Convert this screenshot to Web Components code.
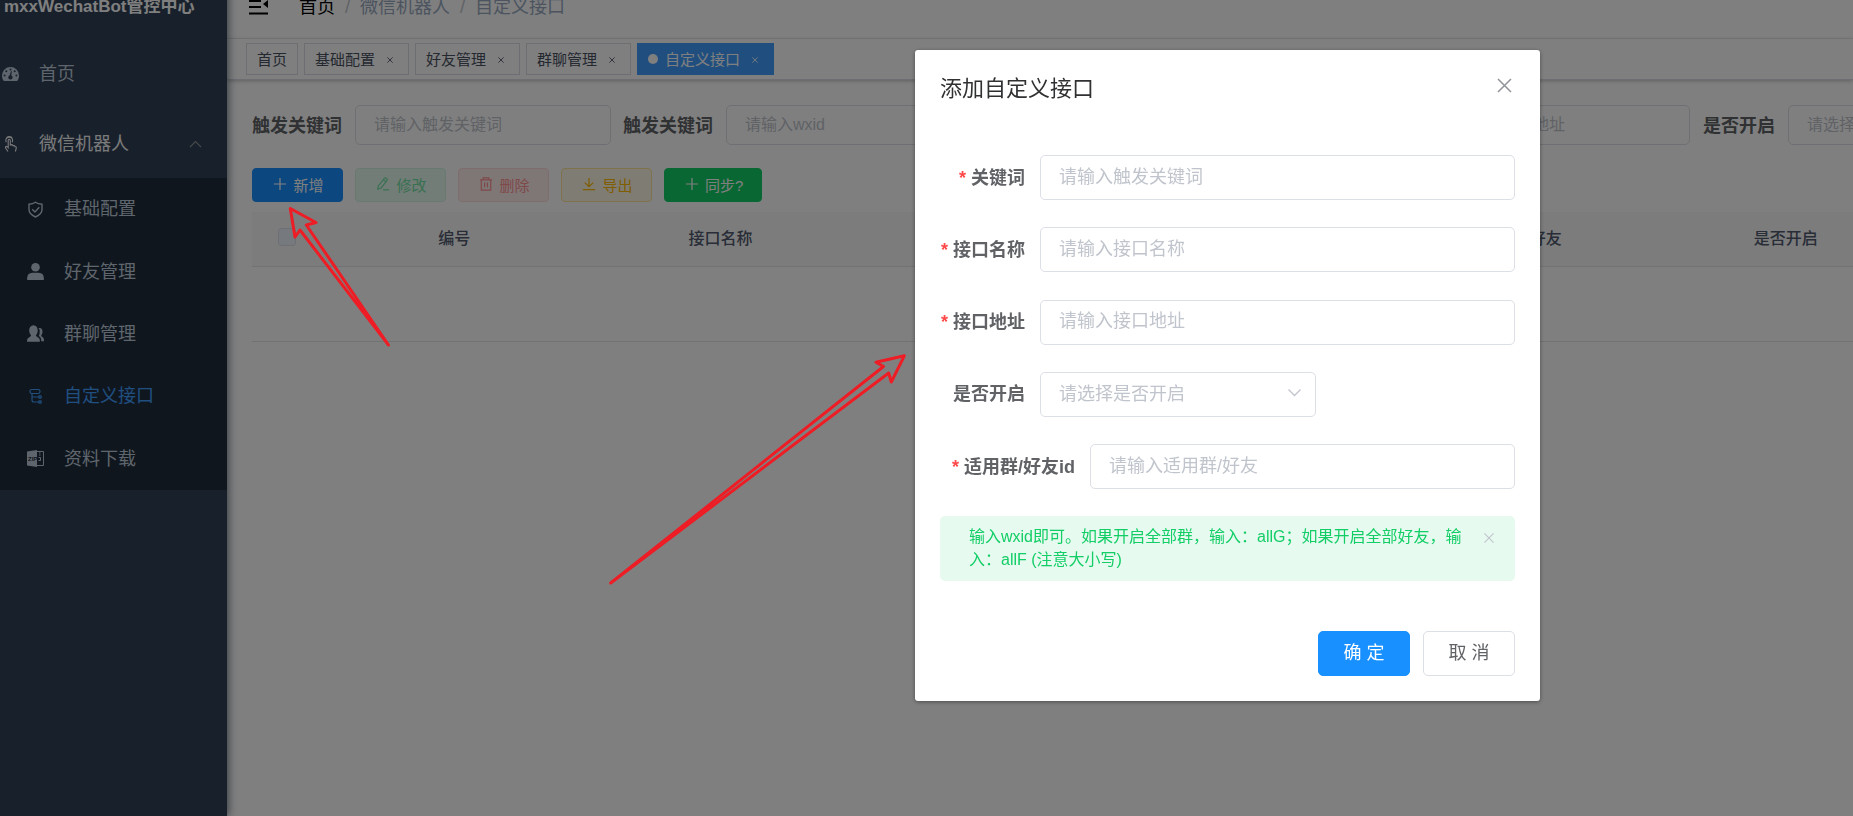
<!DOCTYPE html>
<html lang="zh-CN">
<head>
<meta charset="utf-8">
<title>mxxWechatBot管控中心</title>
<style>
html, body { margin: 0; height: 100%; overflow: hidden; }
body { font-family: "Liberation Sans", "Noto Sans CJK SC", sans-serif; font-size: 18px; color: #303133; background: #fff; }
</style>
</head>
<body>
<bot-app></bot-app>
<script>
const ICONS = {
  dashboard: '<path fill="currentColor" fill-rule="evenodd" d="M8.500 1A8.500 8.500 0 0 0 0 9.500C0 11.500.6 13.300 1.400 14.600Q1.700 15 2.300 15H14.700Q15.300 15 15.600 14.600C16.400 13.300 17 11.500 17 9.500A8.500 8.500 0 0 0 8.500 1ZM8.500 2.500a1 1 0 1 1 0 2 1 1 0 0 1 0-2ZM4.300 4.200a1 1 0 1 1 0 2 1 1 0 0 1 0-2ZM12.700 4.200a1 1 0 1 1 0 2 1 1 0 0 1 0-2ZM2.600 8.500a1 1 0 1 1 0 2 1 1 0 0 1 0-2ZM14.400 8.500a1 1 0 1 1 0 2 1 1 0 0 1 0-2ZM9.800 5.200 9.300 9.400A2.200 2.200 0 1 1 7.800 9.300L9 5Z"/>',
  touch: '<g fill="none" stroke="currentColor" stroke-width="1.100"><path d="M6 15.500 3.800 12.200Q3 10.800 4 10.400 5 10.200 6.200 11.700V4.300Q6.200 3.200 7.200 3.200T8.300 4.300V9L9.800 8.600Q11 8.600 11.100 9.800 12.800 9.200 13 10.600 14.500 10.500 14.300 12L13.400 15.500"/><path d="M4.200 6.200A3.400 3.400 0 0 1 3.900 4.500 3.300 3.300 0 0 1 10.600 4.500 3.400 3.400 0 0 1 10.200 6.200M4.700 1.400Q7.200-.4 10 1.400"/></g>',
  shield: '<g fill="none" stroke="currentColor" stroke-width="1.400"><path d="M8.500 1.200Q11 3 15 3.200V8.600Q15 13.200 8.500 16 2 13.200 2 8.600V3.200Q6 3 8.500 1.200Z"/><path d="m5.200 8.200 2.700 2.700 4.400-4.600"/></g>',
  user: '<g fill="currentColor"><circle cx="8.500" cy="4.300" r="4.300"/><path d="M0 16.200Q0 9.800 5.500 9.800H11.500Q17 9.800 17 16.200Q17 17 16 17H1Q0 17 0 16.200Z"/></g>',
  peoples: '<g fill="currentColor"><path d="M6.500.2C9.200.2 10.700 2.300 10.700 5.400 10.700 7.500 9.900 9 9 9.900 9 11 9.500 11.400 10.800 12.200 12.400 13.100 12.900 14 12.900 16.800H0C0 14 .7 13.100 2.300 12.200 3.600 11.400 4 11 4 9.900 3 9 2.200 7.500 2.200 5.400 2.200 2.300 3.800.2 6.500.2Z"/><path d="M11.500 3C14.300 2.400 15.500 4.200 15.500 6.600 15.500 8.200 15 9.400 14.300 10.200 14.200 11.200 14.700 11.500 15.500 12 16.700 12.800 17 14 17 16.200H14.300C14.200 13.300 13.500 12.100 11.700 11.100 12.500 9.700 12.700 8.400 12.700 6 12.700 4.700 12.300 3.700 11.500 3Z"/></g>',
  tree: '<g fill="none" stroke="currentColor" stroke-width="1.200"><rect x="3" y="1.500" width="10" height="4" rx="1.800"/><path d="M5 5.500V12.300Q5 14 7 14H12M5.200 9H12"/><rect x="11.800" y="7.800" width="2.400" height="2.400" rx=".8"/><rect x="11.800" y="12.800" width="2.400" height="2.400" rx=".8"/></g>',
  zip: '<path fill="currentColor" d="M0 1.500 10 0V17L0 15.500Z"/><path fill="none" stroke="currentColor" d="M10 1.500H16.500V15.500H10M12 3h1.500M12 5h1.500M11.500 7.500h2v3h-2"/><text x="1" y="11" font-size="6" font-weight="700" font-family="Liberation Sans, sans-serif" fill="#1f2d3d">ZIP</text>',
  fold: '<path fill="none" stroke="#000" stroke-width="2" d="M0 2H12M0 8H12M0 14.500H19"/><path d="M19 1V9L14 5Z"/>',
  up: '<path fill="none" stroke="currentColor" stroke-width="1.100" d="m3 11 5.500-5.500L14 11"/>',
  down: '<path fill="none" stroke="currentColor" stroke-width="1.300" d="m2.500 5.500 6 6 6-6"/>',
  plus: '<path fill="none" stroke="currentColor" stroke-width="1.300" d="M8.500 2V15M2 8.500H15"/>',
  edit: '<path fill="none" stroke="currentColor" stroke-width="1.300" d="M3 14 3.500 10.500 10 2.500Q11 1.500 12.300 2.500T12.700 5L6.500 12.700 3 14ZM9 4 11.500 6M8.500 14.700H15"/>',
  trash: '<path fill="none" stroke="currentColor" stroke-width="1.300" d="M2 4H15M5.500 4V2H11.500V4M3.500 4V15H13.500V4M7 7V12M10 7V12"/>',
  download: '<path fill="none" stroke="currentColor" stroke-width="1.300" d="M8.500 2V11M4 7 8.500 11.300 13 7M2 14.500H15"/>',
  cross: '<path fill="none" stroke="currentColor" stroke-width="1.500" d="M2 2 15 15M15 2 2 15"/>',
  close: '<path fill="none" stroke="currentColor" stroke-width="2.400" d="M1 1 16 16M16 1 1 16"/>'
};
function define(name, render) {
  customElements.define(name, class extends HTMLElement {
    connectedCallback() {
      if (this.shadowRoot) return;
      const t = document.createElement('template');
      t.innerHTML = render(this);
      this.attachShadow({ mode: 'open' }).append(t.content.cloneNode(true));
    }
  });
}
const attr = (el, n, d = '') => el.getAttribute(n) ?? d;

define('bot-icon', el => `<style>
:host { display: inline-block; flex: none; width: 17px; height: 17px; }
svg { display: block; width: 100%; height: 100%; overflow: visible; }
</style><svg viewBox="0 0 ${attr(el, 'name') === 'fold' ? 19 : 17} 17" aria-hidden="true">${ICONS[attr(el, 'name')]}</svg>`);

define('menu-item', el => `<style>
:host { display: block; height: 70px; color: #bfcbd9; }
:host([open]) { color: #f4f4f5; }
:host([sub]) { height: auto; }
:host([active]) { color: #409eff; }
a { display: flex; align-items: center; gap: 20px; box-sizing: border-box; height: 100%; padding: 2px 23px 0 2px; color: inherit; text-decoration: none; line-height: 26px; }
:host([sub]) a { padding: 0 0 0 27px; }
.arrow { margin-left: auto; color: #909399; }
</style><a href="#"><bot-icon name="${attr(el, 'icon')}"></bot-icon><span><slot></slot></span>${el.hasAttribute('open') ? '<bot-icon class="arrow" name="up"></bot-icon>' : ''}</a>`);

define('side-bar', () => `<style>
:host { display: block; flex: 0 0 227px; background: #304156; box-shadow: 2px 0 8px rgba(0,21,41,.5); z-index: 1; }
h1 { margin: 0; height: 62px; padding-left: 4px; font-size: 17px; line-height: 62px; color: #fff; font-weight: 700; white-space: nowrap; }
.sub { display: grid; grid-auto-rows: 1fr; height: 312px; background: #1f2d3d; }
</style>
<h1>mxxWechatBot管控中心</h1>
<nav>
<menu-item icon="dashboard">首页</menu-item>
<menu-item icon="touch" open>微信机器人</menu-item>
<div class="sub">
<menu-item sub icon="shield">基础配置</menu-item>
<menu-item sub icon="user">好友管理</menu-item>
<menu-item sub icon="peoples">群聊管理</menu-item>
<menu-item sub active icon="tree">自定义接口</menu-item>
<menu-item sub icon="zip">资料下载</menu-item>
</div>
</nav>`);

define('nav-bar', () => `<style>
:host { display: flex; align-items: center; height: 63px; padding-left: 22px; gap: 31px; line-height: 26px; border-bottom: 1px solid #f0f1f2; box-sizing: border-box; }
bot-icon { width: 19px; }
ol { display: flex; gap: 10px; margin: 0; padding: 0; list-style: none; color: #97a8be; }
a { color: #000; text-decoration: none; }
.sep { color: #c0c4cc; }
</style>
<bot-icon name="fold"></bot-icon>
<ol><li><a href="#">首页</a></li><li class="sep">/</li><li>微信机器人</li><li class="sep">/</li><li>自定义接口</li></ol>`);

define('tag-item', el => `<style>
:host { display: block; }
a { display: flex; align-items: center; box-sizing: border-box; height: 32px; padding: 0 10px 1px; border: 1px solid #d8dce5; background: #fff; color: #495060; font-size: 15px; text-decoration: none; }
:host([active]) a { background: #409eff; border-color: #409eff; color: #fff; }
:host([active]) a::before { content: ""; width: 10px; height: 10px; border-radius: 50%; background: #fff; margin-right: 7px; }
bot-icon { width: 6px; height: 6px; margin: 3px 5px 0 12px; }
</style><a href="#"><slot></slot>${el.hasAttribute('fixed') ? '' : '<bot-icon name="close"></bot-icon>'}</a>`);

define('tags-view', () => `<style>
:host { display: flex; gap: 6px; box-sizing: border-box; height: 41px; padding: 4px 19px; border-bottom: 1px solid #d8dce5; box-shadow: 0 1px 4px rgba(0,0,0,.25); }
</style>
<tag-item fixed>首页</tag-item><tag-item>基础配置</tag-item><tag-item>好友管理</tag-item><tag-item>群聊管理</tag-item><tag-item active>自定义接口</tag-item>`);

/* Label with a text box or drop-down; "compact" is the size used in the search bar. */
define('form-field', el => {
  const ph = attr(el, 'placeholder');
  const control = el.hasAttribute('select')
    ? `<span class="box"><select id="f"><option>${ph}</option><option>是</option><option>否</option></select><bot-icon name="down"></bot-icon></span>`
    : `<span class="box"><input id="f" type="text" placeholder="${ph}"></span>`;
  return `<style>
:host { display: flex; align-items: center; --h: 45px; --f: 18px; }
:host([compact]) { flex: none; --h: 40px; --f: 16px; }
label { flex: none; box-sizing: border-box; width: 100px; padding: 0 15px 4px 0; text-align: right; font-weight: 700; color: #606266; white-space: nowrap; }
:host([wide]) label { width: 150px; }
:host([compact]) label { width: auto; min-width: 86px; padding: 0 13px 3px 0; }
.req { color: #ff4949; margin-right: 5px; }
.box { display: flex; align-items: center; flex: 1; box-sizing: border-box; height: var(--h); border: 1px solid #dcdfe6; border-radius: 5px; background: #fff; }
:host([compact]) .box { flex: 0 0 256px; }
:host([select]:not([compact])) .box { flex: 0 0 276px; }
input, select { flex: 1; min-width: 0; height: 100%; box-sizing: border-box; margin: 0; padding: 0 18px 1px; border: 0; outline: 0; background: none; appearance: none; font: inherit; font-size: var(--f); color: #c0c4cc; }
input::placeholder { color: #c0c4cc; opacity: 1; }
bot-icon { width: 17px; height: 17px; margin: 0 12px 3px 0; color: #c0c4cc; }
</style><label for="f">${el.hasAttribute('required') ? '<span class="req">*</span>' : ''}${attr(el, 'label')}</label>${control}`;
});

define('tool-button', el => `<style>
:host { display: block; }
button { display: flex; align-items: center; justify-content: center; gap: 4px; box-sizing: border-box; min-width: 91px; height: 34px; padding: 0 18px 2px; border: 1px solid; border-radius: 4px; font: inherit; font-size: 15px; }
.primary { background: #1890ff; border-color: #1890ff; color: #fff; }
.edit { background: #e7faf0; border-color: #d0f5e0; color: #71e2a3; }
.delete { background: #ffeded; border-color: #ffdbdb; color: #ff9292; }
.export { background: #fff8e6; border-color: #ffe399; color: #ffba00; }
.success { background: #13ce66; border-color: #13ce66; color: #fff; }
bot-icon { width: 16px; height: 16px; margin: 0 1px; }
</style><button type="button" class="${attr(el, 'kind')}" ${el.hasAttribute('disabled') ? 'disabled' : ''}><bot-icon name="${attr(el, 'icon')}"></bot-icon><span><slot></slot></span></button>`);

define('api-table', () => `<style>
:host { display: block; }
table { table-layout: fixed; width: 1667px; border-collapse: collapse; }
col { width: auto; } col.pick { width: 69px; }
th { height: 54px; box-sizing: border-box; padding: 0 0 3px; background: #f8f8f9; border-bottom: 1px solid #dfe6ec; color: #515a6e; font-size: 16px; font-weight: 500; }
td { height: 74px; padding: 0; border-bottom: 1px solid #dfe6ec; }
input { display: block; appearance: none; width: 18px; height: 18px; margin: 0 auto; border: 1px solid #dcdfe6; border-radius: 3px; background: #edf2fc; }
</style>
<table>
<colgroup><col class="pick"><col><col><col><col><col><col></colgroup>
<thead><tr><th><input type="checkbox" disabled aria-label="全选"></th><th>编号</th><th>接口名称</th><th></th><th></th><th>适用群/好友</th><th>是否开启</th></tr></thead>
<tbody><tr><td colspan="7"></td></tr></tbody>
</table>`);

define('api-page', () => `<style>
:host { display: block; padding: 25px 0 0 25px; overflow: hidden; }
form { display: flex; gap: 12px; }
.tools { display: flex; gap: 12px; margin: 23px 0 10px; }
</style>
<form>
<form-field compact label="触发关键词" placeholder="请输入触发关键词"></form-field>
<form-field compact label="触发关键词" placeholder="请输入wxid"></form-field>
<form-field compact label="接口名称" placeholder="请输入接口名称"></form-field>
<form-field compact label="接口地址" placeholder="请输入接口地址"></form-field>
<form-field compact select label="是否开启" placeholder="请选择是否开启"></form-field>
</form>
<div class="tools">
<tool-button kind="primary" icon="plus">新增</tool-button>
<tool-button kind="edit" icon="edit" disabled>修改</tool-button>
<tool-button kind="delete" icon="trash" disabled>删除</tool-button>
<tool-button kind="export" icon="download">导出</tool-button>
<tool-button kind="success" icon="plus">同步?</tool-button>
</div>
<api-table></api-table>`);

define('note-alert', () => `<style>
:host { display: flex; align-items: flex-start; padding: 9px 20px 10px 29px; border-radius: 5px; background: #e7faf0; color: #13ce66; font-size: 16px; line-height: 23px; }
p { margin: 0; width: 504px; }
button { margin: 7px 0 0 auto; padding: 0; border: 0; background: none; color: #c0c4cc; line-height: 0; }
bot-icon { width: 12px; height: 12px; }
</style><p><slot></slot></p><button type="button" aria-label="关闭提示"><bot-icon name="cross"></bot-icon></button>`);

define('api-dialog', () => `<style>
:host { display: flex; justify-content: flex-end; align-items: flex-start; position: fixed; inset: 0; padding: 50px 313px 0 0; background: rgba(0,0,0,.5); z-index: 5; }
section { box-sizing: border-box; width: 625px; padding: 25px; border-radius: 3px; background: #fff; box-shadow: 0 1px 4px rgba(0,0,0,.4); }
header { display: flex; justify-content: space-between; align-items: center; height: 28px; }
h2 { margin: 0; font-size: 22px; font-weight: 400; line-height: 28px; color: #303133; }
header button { margin: 0 2px 7px 0; padding: 0; border: 0; background: none; color: #909399; line-height: 0; }
.fields { display: grid; align-content: space-between; height: 334px; margin: 52px 0 27px; }
footer { display: flex; justify-content: flex-end; gap: 13px; margin-top: 50px; }
footer button { width: 92px; height: 45px; box-sizing: border-box; padding: 0 0 6px; border: 1px solid #dcdfe6; border-radius: 5px; background: #fff; color: #606266; font: inherit; }
footer .ok { border-color: #1890ff; background: #1890ff; color: #fff; }
</style>
<section role="dialog" aria-labelledby="t">
<header><h2 id="t">添加自定义接口</h2><button type="button" aria-label="关闭"><bot-icon name="cross"></bot-icon></button></header>
<div class="fields">
<form-field required label="关键词" placeholder="请输入触发关键词"></form-field>
<form-field required label="接口名称" placeholder="请输入接口名称"></form-field>
<form-field required label="接口地址" placeholder="请输入接口地址"></form-field>
<form-field select label="是否开启" placeholder="请选择是否开启"></form-field>
<form-field required wide label="适用群/好友id" placeholder="请输入适用群/好友"></form-field>
</div>
<note-alert>输入wxid即可。如果开启全部群，输入：allG；如果开启全部好友，输入：allF (注意大小写)</note-alert>
<footer><button type="button" class="ok">确 定</button><button type="button">取 消</button></footer>
</section>`);

/* Hand-drawn arrows pointing at the add button and at the dialog. */
define('guide-arrows', () => `<style>
:host { position: fixed; inset: 0; z-index: 6; pointer-events: none; }
svg { display: block; width: 100%; height: 100%; }
</style><svg fill="none" stroke="#ee1c24" stroke-width="3" stroke-linejoin="round" aria-hidden="true">
<path d="M388.500 345 306.300 225 316 222.500 290.300 208.500 295 237 300 230Z"/>
<path d="M610.700 583 883.500 366.500 876 362.300 904.300 355.800 891.300 382 888.700 373Z"/>
</svg>`);

define('bot-app', () => `<style>
:host { display: block; height: 100%; overflow: hidden; }
/* The page is scrolled down a little. */
.shell { display: flex; min-height: calc(100% + 24px); margin-top: -24px; }
main { flex: 1; min-width: 0; }
</style>
<div class="shell"><side-bar></side-bar><main><nav-bar></nav-bar><tags-view></tags-view><api-page></api-page></main></div>
<api-dialog></api-dialog>
<guide-arrows></guide-arrows>`);
</script>
</body>
</html>
